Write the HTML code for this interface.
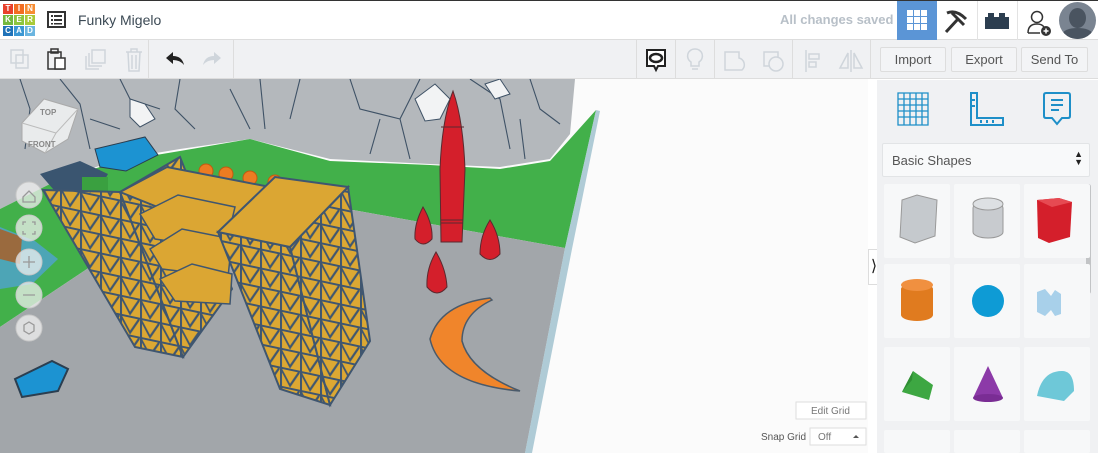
<!DOCTYPE html>
<html><head><style>
*{margin:0;padding:0;box-sizing:border-box}
html,body{width:1098px;height:453px;overflow:hidden}
body{font-family:"Liberation Sans",sans-serif;background:#fff;position:relative}
.top{position:absolute;left:0;top:0;width:1098px;height:40px;background:#fff;border-top:1px solid #333;border-bottom:1px solid #ddd}
.tb{position:absolute;left:0;top:40px;width:1098px;height:39px;background:#f0f1f3;border-bottom:1px solid #ddd}
.logo{position:absolute;left:3px;top:3px;width:33px;height:35px}
.logo div{position:absolute;width:10px;height:10px;color:#fff;font-size:8px;font-weight:bold;text-align:center;line-height:10px}
.btn{position:absolute;top:47px;height:25px;border:1px solid #ddd;background:#f3f4f6;border-radius:2px;font-size:13px;color:#555;text-align:center;line-height:23px}
.hsep{position:absolute;top:0;width:1px;height:40px;background:#e3e3e3}
.panel{position:absolute;left:877px;top:80px;width:221px;height:373px;background:#f0f1f3;overflow:hidden}
.cell{position:absolute;width:66px;height:74px;background:#f7f8f9;border-radius:2px}
</style></head><body>
<div class="top">
 <div class="logo">
  <div style="left:0;top:0;background:#e8412c">T</div><div style="left:11px;top:0;background:#f26e22">I</div><div style="left:22px;top:0;background:#f68d34">N</div>
  <div style="left:0;top:11px;background:#74b83e">K</div><div style="left:11px;top:11px;background:#8dc63f">E</div><div style="left:22px;top:11px;background:#a9ca3a">R</div>
  <div style="left:0;top:22px;background:#1f72b8">C</div><div style="left:11px;top:22px;background:#3b97d3">A</div><div style="left:22px;top:22px;background:#6bb5e0">D</div>
 </div>
 <svg style="position:absolute;left:47px;top:10px" width="19" height="17"><rect x="1" y="1" width="17" height="15" fill="none" stroke="#333" stroke-width="2"/><g fill="#333"><rect x="4" y="4" width="2" height="2"/><rect x="7" y="4" width="8" height="2"/><rect x="4" y="8" width="2" height="2"/><rect x="7" y="8" width="8" height="2"/><rect x="4" y="12" width="2" height="1.5"/><rect x="7" y="12" width="8" height="1.5"/></g></svg>
 <div style="position:absolute;left:78px;top:11px;font-size:14px;color:#3c4a55">Funky Migelo</div>
 <div style="position:absolute;left:780px;top:11px;font-size:13px;color:#b8c0c8;font-weight:bold">All changes saved</div>
 <div style="position:absolute;left:897px;top:0;width:40px;height:40px;background:#5b95d6"></div>
 <svg style="position:absolute;left:907px;top:9px" width="21" height="21" fill="#fff"><rect x="0" y="0" width="6" height="6"/><rect x="7" y="0" width="6" height="6"/><rect x="14" y="0" width="6" height="6"/><rect x="0" y="7" width="6" height="6"/><rect x="7" y="7" width="6" height="6"/><rect x="14" y="7" width="6" height="6"/><rect x="0" y="14" width="6" height="6"/><rect x="7" y="14" width="6" height="6"/><rect x="14" y="14" width="6" height="6"/></svg>
 <div class="hsep" style="left:977px"></div><div class="hsep" style="left:1017px"></div>
 <svg style="position:absolute;left:944px;top:8px" width="26" height="26"><path d="M3 4 Q12 0 22 10 M8 4 L20 16 M14 10 L2 23" stroke="#333" stroke-width="3" fill="none"/></svg>
 <svg style="position:absolute;left:985px;top:12px" width="24" height="16" fill="#2c3e50"><rect x="0" y="4" width="24" height="12"/><rect x="3" y="0" width="6" height="5"/><rect x="14" y="0" width="6" height="5"/></svg>
 <svg style="position:absolute;left:1026px;top:8px" width="26" height="28"><circle cx="11" cy="8" r="5.5" fill="none" stroke="#333" stroke-width="1.5"/><path d="M2 24 Q2 15 11 15 Q16 15 18 18 M2 24 H14" fill="none" stroke="#333" stroke-width="1.5"/><circle cx="20" cy="22" r="5" fill="#333"/><path d="M20 19.5v5M17.5 22h5" stroke="#fff" stroke-width="1.5"/></svg>
 <div style="position:absolute;left:1059px;top:1px;width:37px;height:37px;border-radius:50%;background:#7a8491;overflow:hidden"><div style="position:absolute;left:10px;top:6px;width:17px;height:20px;border-radius:50%;background:#4a5460"></div><div style="position:absolute;left:4px;top:26px;width:29px;height:11px;border-radius:50% 50% 0 0;background:#4a5460"></div></div>
</div>
<div class="tb">
 <svg style="position:absolute;left:10px;top:9px" width="20" height="22" fill="none" stroke="#cfd5db" stroke-width="1.5"><rect x="1" y="1" width="12" height="13"/><rect x="6" y="6" width="12" height="13"/></svg>
 <svg style="position:absolute;left:47px;top:8px" width="20" height="24" fill="none" stroke="#333" stroke-width="1.5"><rect x="1" y="4" width="13" height="17"/><rect x="4" y="1" width="7" height="4"/><rect x="8" y="10" width="10" height="11" fill="#fff"/></svg>
 <svg style="position:absolute;left:85px;top:8px" width="22" height="24" fill="none" stroke="#cfd5db" stroke-width="1.5"><rect x="7" y="2" width="13" height="13"/><path d="M4 5v13h13M1 8v13h13"/></svg>
 <svg style="position:absolute;left:124px;top:7px" width="20" height="26" fill="none" stroke="#cfd5db" stroke-width="1.5"><path d="M2 5h16M7 5V2h6v3M4 5l1 19h10l1-19M8 8v14M12 8v14"/></svg>
 <div style="position:absolute;left:148px;top:0;width:1px;height:39px;background:#ddd"></div>
 <svg style="position:absolute;left:164px;top:11px" width="22" height="16"><path d="M2 7 L9 1 L9 5 Q18 5 20 14 Q16 9 9 9 L9 13 Z" fill="#222"/></svg>
 <svg style="position:absolute;left:201px;top:11px" width="22" height="16"><path d="M20 7 L13 1 L13 5 Q4 5 2 14 Q6 9 13 9 L13 13 Z" fill="#cfd5db"/></svg>
 <div style="position:absolute;left:233px;top:0;width:1px;height:39px;background:#ddd"></div>
 <div style="position:absolute;left:636px;top:0;width:1px;height:39px;background:#ddd"></div>
 <svg style="position:absolute;left:645px;top:8px" width="22" height="26"><path d="M2 2h18v16h-7l-2 4-2-4H2z" fill="#fff" stroke="#222" stroke-width="2"/><ellipse cx="11" cy="10" rx="6" ry="4" fill="none" stroke="#222" stroke-width="2.5"/></svg>
 <div style="position:absolute;left:675px;top:0;width:1px;height:39px;background:#ddd"></div>
 <svg style="position:absolute;left:685px;top:8px" width="20" height="26" fill="none" stroke="#cfd5db" stroke-width="1.5"><path d="M10 1a7 7 0 0 0-4 13v4h8v-4a7 7 0 0 0-4-13zM7 21h6"/></svg>
 <div style="position:absolute;left:714px;top:0;width:1px;height:39px;background:#ddd"></div>
 <svg style="position:absolute;left:723px;top:10px" width="24" height="24" fill="none" stroke="#cfd5db" stroke-width="1.5"><path d="M2 2h14v6a7 7 0 0 1 3 12H2z"/></svg>
 <svg style="position:absolute;left:762px;top:10px" width="24" height="24" fill="none" stroke="#cfd5db" stroke-width="1.5"><rect x="2" y="2" width="14" height="14"/><circle cx="14" cy="14" r="7" fill="#f0f1f3"/></svg>
 <div style="position:absolute;left:792px;top:0;width:1px;height:39px;background:#ddd"></div>
 <svg style="position:absolute;left:804px;top:9px" width="20" height="24" fill="none" stroke="#cfd5db" stroke-width="1.5"><path d="M2 1v22"/><rect x="5" y="5" width="10" height="5"/><rect x="5" y="13" width="7" height="5"/></svg>
 <svg style="position:absolute;left:838px;top:9px" width="26" height="24" fill="none" stroke="#cfd5db" stroke-width="1.5"><path d="M13 1v22M10 4L2 19h8zM16 4l8 15h-8z"/></svg>
 <div style="position:absolute;left:870px;top:0;width:1px;height:39px;background:#ddd"></div>
</div>
<div class="btn" style="left:880px;width:66px">Import</div>
<div class="btn" style="left:951px;width:66px">Export</div>
<div class="btn" style="left:1021px;width:67px">Send To</div>

<svg style="position:absolute;left:0;top:79px" width="868" height="374">
 <defs>
  <pattern id="lat" width="20" height="19" patternUnits="userSpaceOnUse" patternTransform="skewY(12)">
   <rect width="20" height="19" fill="#dca833"/>
   <path d="M0 1h20M1 0v19M1 2L10 17L19 2" stroke="#3f5670" stroke-width="2" fill="none"/>
  </pattern>
 </defs>
 <rect width="868" height="374" fill="#fbfbfb"/>
 <polygon points="0,0 575,0 570,55 550,80 500,88 430,85 330,80 250,60 180,70 120,80 60,100 0,130" fill="#b4b8bc"/>
 <g fill="none" stroke="#3f5266" stroke-width="1.1">
  <path d="M20 0l10 30-5 40M60 0l20 25 10 45M120 0l10 20 30 10M180 0l-5 30 20 20M260 0l5 50M300 0l-10 40M350 0l10 30 40 10M420 0l-20 40 10 40M470 0l30 20 10 50M530 0l10 30 20 15M230 10l20 40M90 40l30 10M380 40l-10 35M520 40l5 40"/>
 </g>
 <path d="M130 20l15 5 10 15-15 8-10-10zM415 20l20-15 15 15-10 20-15 2zM485 5l15-5 10 15-15 5z" fill="#f2f3f4" stroke="#3f5266"/>
 <polygon points="0,130 60,100 120,82 180,72 250,60 330,82 430,86 500,90 550,82 570,60 596,31 565,169 353,131 90,188 0,248" fill="#42b04a"/>
 <polygon points="0,248 90,188 353,131 565,169 525,374 0,374" fill="#a2a6aa"/>
 <polygon points="565,169 596,31 600,32 572,170 532,374 525,374" fill="#8fb6c6" opacity=".7"/>
 <polygon points="22,44 44,20 78,30 68,60 45,74 22,62" fill="#e9ebec" stroke="#aaa"/>
 <path d="M22 44l34 10 22-24M56 54l-11 20" stroke="#bbb" fill="none"/>
 <text x="40" y="36" font-size="8" fill="#888" font-weight="bold">TOP</text><text x="28" y="68" font-size="8" fill="#888" font-weight="bold">FRONT</text>
 <polygon points="40,95 80,82 108,95 95,118 60,118" fill="#3a5570"/>
 <polygon points="95,70 145,58 158,76 126,92 100,88" fill="#1c93d2" stroke="#2b3e50"/>
 <rect x="82" y="98" width="26" height="16" fill="#3aa040"/>
 <g fill="#ec7c22" stroke="#c25a10"><circle cx="206" cy="92" r="7"/><circle cx="226" cy="95" r="7"/><circle cx="250" cy="99" r="7"/><circle cx="275" cy="103" r="7"/></g>
 <!-- left tower -->
 <polygon points="43,111 120,113 183,278 135,268" fill="url(#lat)" stroke="#3f5670" stroke-width="2"/>
 <polygon points="120,113 180,78 232,210 183,278" fill="url(#lat)" stroke="#3f5670" stroke-width="2"/>
 <!-- bridge slabs -->
 <polygon points="120,113 167,88 270,108 220,153" fill="#dba633" stroke="#3f5670" stroke-width="2"/>
 <polygon points="140,135 178,116 235,128 225,170 155,160" fill="#dba633" stroke="#3f5670" stroke-width="1.5"/>
 <polygon points="150,170 182,150 232,160 228,198 162,190" fill="#dba633" stroke="#3f5670" stroke-width="1.5"/>
 <polygon points="160,200 192,185 232,195 230,225 175,222" fill="#dba633" stroke="#3f5670" stroke-width="1.5"/>
 <!-- right tower -->
 <polygon points="218,153 290,168 330,326 280,310" fill="url(#lat)" stroke="#3f5670" stroke-width="2"/>
 <polygon points="290,168 348,108 370,262 330,326" fill="url(#lat)" stroke="#3f5670" stroke-width="2"/>
 <polygon points="218,153 275,98 348,108 290,168" fill="#dba633" stroke="#3f5670" stroke-width="2"/>
 <path d="M453 12 Q442 40 440 90 L441 163 L462 163 L465 90 Q463 40 453 12Z" fill="#d41f2b" stroke="#5a2a30"/>
 <path d="M441 141h22M441 144h22M441 48h23" stroke="#5a2a30" fill="none"/>
 <path d="M423 128 Q414 145 415 160 Q423 170 432 160 Q433 145 423 128Z M490 141 Q480 157 480 175 Q490 186 500 175 Q500 157 490 141Z M436 173 Q426 190 427 208 Q437 220 447 208 Q446 190 436 173Z" fill="#d41f2b" stroke="#5a2a30"/>
 <path d="M490 219 Q440 225 430 260 Q440 305 520 312 Q470 292 462 262 Q462 235 492 221Z" fill="#f0852b" stroke="#4a5a6a" stroke-width="1.5"/>
 <polygon points="0,148 35,162 58,180 32,205 0,210" fill="#4fa3c9" opacity=".85"/>
 <polygon points="0,150 22,158 20,185 0,180" fill="#9a6a3e"/>
 <path d="M15 300 L52 282 L68 290 L58 312 L22 318Z" fill="#1c93d2" stroke="#2b3e50" stroke-width="2"/>
 <g fill="#f0f0f0" fill-opacity=".75" stroke="#c8c8c8"><circle cx="29" cy="116" r="13"/><circle cx="29" cy="149" r="13"/><circle cx="29" cy="183" r="13"/><circle cx="29" cy="216" r="13"/><circle cx="29" cy="249" r="13"/></g>
 <g stroke="#999" fill="none" stroke-width="1.3"><path d="M23 118l6-6 6 6v5h-12z"/><path d="M23 146v-3h3M35 146v-3h-3M23 152v3h3M35 152v3h-3"/><path d="M23 183h12M29 177v12M23 216h12"/><path d="M24 246l5-3 5 3v6l-5 3-5-3z"/></g>
 <rect x="796" y="323" width="70" height="17" fill="#fff" stroke="#ddd"/><text x="811" y="335" font-size="10" fill="#777">Edit Grid</text>
 <text x="761" y="361" font-size="10" fill="#555">Snap Grid</text>
 <rect x="810" y="349" width="56" height="17" fill="#fff" stroke="#ddd"/><text x="818" y="361" font-size="10" fill="#777">Off</text><path d="M853 359l3-3 3 3z" fill="#555"/>
</svg>
<div style="position:absolute;left:868px;top:249px;width:12px;height:36px;background:#fff;border:1px solid #ddd;font-size:16px;line-height:34px;text-align:center;color:#222">&#10217;</div>

<div class="panel">
 <svg style="position:absolute;left:20px;top:12px" width="32" height="34" fill="none" stroke="#1e8fc8" stroke-width="1.3"><path d="M1 1h30v32H1zM1 7h30M1 13h30M1 19h30M1 25h30M7 1v32M13 1v32M19 1v32M25 1v32"/></svg>
 <svg style="position:absolute;left:92px;top:12px" width="36" height="34" fill="none" stroke="#1e8fc8" stroke-width="2"><path d="M2 1h6v25h26v7H2z M12 28v3M18 28v3M24 28v3M3 8h3M3 14h3"/></svg>
 <svg style="position:absolute;left:166px;top:12px" width="28" height="34" fill="none" stroke="#1e8fc8" stroke-width="2"><path d="M3 1h22q2 0 2 2v21q0 2-2 2h-6l-5 6-5-6H3q-2 0-2-2V3q0-2 2-2zM8 8h12M8 13h12M8 18h8"/></svg>
 <div style="position:absolute;left:5px;top:63px;width:208px;height:34px;background:#f8f9fa;border:1px solid #e2e4e6;border-radius:2px;font-size:13px;color:#555;padding:9px 9px">Basic Shapes<span style="position:absolute;right:6px;top:6px;font-size:9px;line-height:8px;color:#222">▲<br>▼</span></div>
 <div style="position:absolute;left:209px;top:104px;width:5px;height:110px;background:#c2c4c6;border-radius:3px"></div>
 <div class="cell" style="left:7px;top:104px"></div><div class="cell" style="left:77px;top:104px"></div><div class="cell" style="left:147px;top:104px"></div>
 <div class="cell" style="left:7px;top:184px"></div><div class="cell" style="left:77px;top:184px"></div><div class="cell" style="left:147px;top:184px"></div>
 <div class="cell" style="left:7px;top:267px"></div><div class="cell" style="left:77px;top:267px"></div><div class="cell" style="left:147px;top:267px"></div>
 <div class="cell" style="left:7px;top:350px;height:23px"></div><div class="cell" style="left:77px;top:350px;height:23px"></div><div class="cell" style="left:147px;top:350px;height:23px"></div>
 <svg style="position:absolute;left:0;top:100px" width="221" height="273">
  <polygon points="25,20 40,15 60,20 58,56 38,63 23,57" fill="#c5c9cd" stroke="#999"/>
  <rect x="96" y="22" width="30" height="36" rx="15" ry="6" fill="#c8cbcf" stroke="#999"/><ellipse cx="111" cy="24" rx="15" ry="6" fill="#dde0e3" stroke="#999"/>
  <polygon points="160,20 182,18 195,22 193,57 172,63 161,58" fill="#d41f2b"/><polygon points="160,20 182,18 195,22 175,27" fill="#e64a52"/>
  <rect x="24" y="103" width="32" height="38" rx="16" ry="6" fill="#e07b1f"/><ellipse cx="40" cy="105" rx="16" ry="6" fill="#f09040"/>
  <circle cx="111" cy="121" r="16" fill="#0e9bd5"/>
  <path d="M160 112l8-3 6 7 4-6 6 4v20l-6 2-4-6-6 6-8-4z" fill="#a8d0ea"/>
  <polygon points="36,191 56,205 52,220 25,212" fill="#3da742"/><polygon points="36,191 25,212 35,200" fill="#2f8e34"/>
  <polygon points="111,186 96,218 126,218" fill="#8c3aa8"/><ellipse cx="111" cy="218" rx="15" ry="4" fill="#7a2d94"/>
  <path d="M160 216q5-25 25-25q12 0 12 20l-10 10z" fill="#6ec8d8"/>
 </svg>
</div>
</body></html>
